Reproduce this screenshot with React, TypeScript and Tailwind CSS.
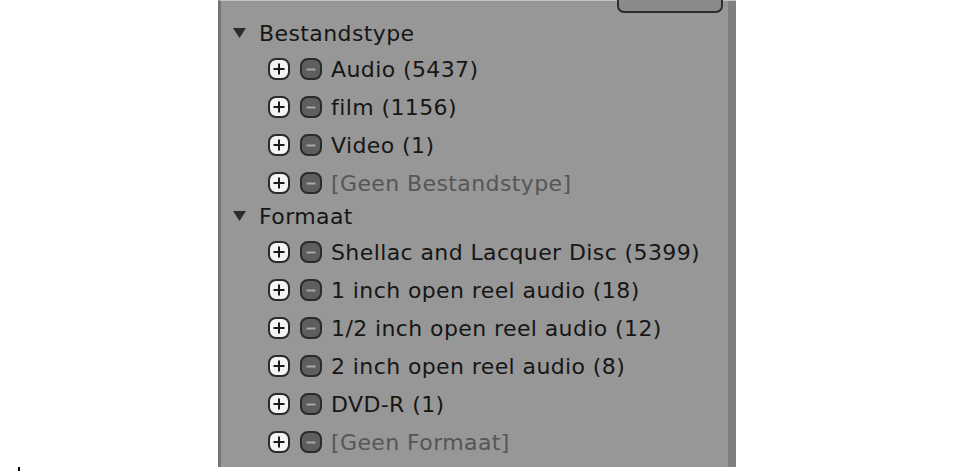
import React from 'react'

type Item = { label: string; empty?: boolean }
type Group = { title: string; items: Item[] }

const groups: Group[] = [
  {
    title: 'Bestandstype',
    items: [
      { label: 'Audio (5437)' },
      { label: 'film (1156)' },
      { label: 'Video (1)' },
      { label: '[Geen Bestandstype]', empty: true },
    ],
  },
  {
    title: 'Formaat',
    items: [
      { label: 'Shellac and Lacquer Disc (5399)' },
      { label: '1 inch open reel audio (18)' },
      { label: '1/2 inch open reel audio (12)' },
      { label: '2 inch open reel audio (8)' },
      { label: 'DVD-R (1)' },
      { label: '[Geen Formaat]', empty: true },
    ],
  },
]

const PlusIcon = () => (
  <svg width="22" height="22" viewBox="0 0 22 22">
    <rect x="1" y="1" width="20" height="20" rx="7" fill="#f4f4f4" stroke="#2a2a2a" strokeWidth="2" />
    <path d="M11 5.5v11M5.5 11h11" stroke="#1a1a1a" strokeWidth="2" />
  </svg>
)

const MinusIcon = () => (
  <svg width="22" height="22" viewBox="0 0 22 22">
    <rect x="1" y="1" width="20" height="20" rx="7" fill="#5e5e5e" stroke="#2a2a2a" strokeWidth="2" />
    <path d="M6.5 11.5h9" stroke="#a8a8a8" strokeWidth="2" />
  </svg>
)

const Triangle = () => (
  <svg width="13" height="10" viewBox="0 0 13 10">
    <path d="M0 0h13L6.5 10z" fill="#2b2b2b" />
  </svg>
)

export default function App() {
  return (
    <div className="min-h-[471px] bg-white font-['DejaVu_Sans',sans-serif] text-[22px] tracking-[0.4px]">
      <div className="ml-[218px] flex h-[467px] w-[518px] border-l-[3px] border-t border-l-[#767676] border-t-[#c4c4c4] bg-[#979797]">
        <div className="relative flex-1">
          <div className="absolute top-[-1px] right-[5px] h-[13px] w-[106px] rounded-b-[7px] border-2 border-t-0 border-[#2d2d2d] bg-[#8a8a8a]" />
          <div className="flex flex-col pt-[18px]">
            {groups.map((group) => (
              <div key={group.title} className="flex flex-col">
                <div className="flex h-[28px] items-center pl-[12px] text-[#161616]">
                  <Triangle />
                  <span className="ml-[13px]">{group.title}</span>
                </div>
                <div className="flex flex-col pt-[3px]">
                  {group.items.map((item) => (
                    <div key={item.label} className="flex h-[38px] items-center pl-[47px]">
                      <PlusIcon />
                      <span className="ml-[10px]">
                        <MinusIcon />
                      </span>
                      <span className={item.empty ? 'ml-[9px] text-[#565656]' : 'ml-[9px] text-[#161616]'}>
                        {item.label}
                      </span>
                    </div>
                  ))}
                </div>
              </div>
            ))}
          </div>
        </div>
        <div className="w-[8px] bg-[#7f7f7f]" />
      </div>
      <div className="ml-[18px] h-[4px] w-[2px] bg-black" />
    </div>
  )
}
